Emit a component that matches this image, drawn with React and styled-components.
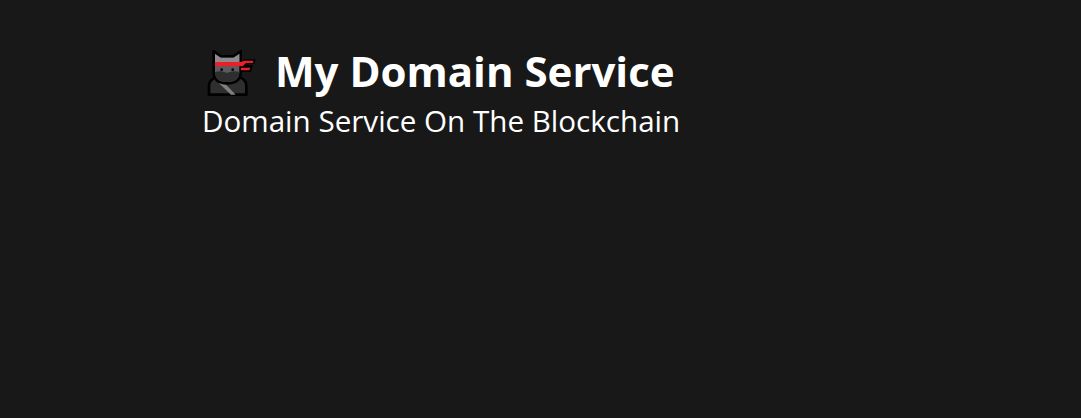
import React from 'react';
import styled, { createGlobalStyle } from 'styled-components';

const GlobalStyle = createGlobalStyle`
  html, body {
    margin: 0;
    padding: 0;
    background-color: #181818;
  }
`

const Page = styled.div`
  min-height: 418px;
  box-sizing: border-box;
  padding: 45px 0 0 202px;
  background-color: #181818;
  color: white;
  font-family: 'Open Sans', 'Noto Sans', sans-serif;
`

const Header = styled.header`
  display: flex;
  flex-direction: column;
  align-items: flex-start;
`

const TitleRow = styled.div`
  display: flex;
  align-items: flex-start;
  gap: 18px;
  padding-left: 3px;
`

const IconBox = styled.div`
  width: 52px;
  height: 50px;
  margin-top: 3px;
`

const Title = styled.h1`
  margin: 0;
  font-size: 42px;
  line-height: 52px;
  font-weight: 700;
`

const Subtitle = styled.p`
  margin: 0;
  font-size: 29.6px;
  line-height: 46px;
  font-weight: 400;
`

// coordinates are taken from a 3x crop of the emoji
const NinjaCat = () => (
  <svg width="52" height="50" viewBox="0 0 156 150">
    <path d="M12 140 V115 Q12 95 34 88 H104 Q124 95 124 115 V140 Z" fill="#2f2f2f" stroke="#000" strokeWidth="8" strokeLinejoin="round" />
    <path d="M28 92 L78 140 H92 L42 88 Z" fill="#808080" />
    <path d="M26 10 L48 25 H84 L107 10 V75 Q105 106 66 106 Q28 106 26 75 Z" fill="#5c5c5c" stroke="#000" strokeWidth="8" strokeLinejoin="round" />
    <path d="M30 18 L47 29 H86 L103 18 V42 H30 Z" fill="#8c8c8c" />
    <path d="M30 72 Q50 66 66 75 Q84 66 103 72 Q102 102 66 102 Q31 102 30 72 Z" fill="#2e2e2e" />
    <path d="M107 44 L118 34 H152 L147 47 H128 L124 50 H144 L138 72 H108 Z" fill="#000" />
    <path d="M30 42 H106 L119 38 H146 L143 45 H123 L113 55 H30 Z" fill="#ea1f2d" />
    <path d="M108 59 H136 L133 67 H108 Z" fill="#ea1f2d" />
    <circle cx="50" cy="65" r="4" fill="#000" />
    <circle cx="83" cy="65" r="4" fill="#000" />
  </svg>
)

const App = () => {
  return (
    <Page>
      <GlobalStyle />
      <Header>
        <TitleRow>
          <IconBox>
            <NinjaCat />
          </IconBox>
          <Title>My Domain Service</Title>
        </TitleRow>
        <Subtitle>Domain Service On The Blockchain</Subtitle>
      </Header>
    </Page>
  )
}

export default App;
